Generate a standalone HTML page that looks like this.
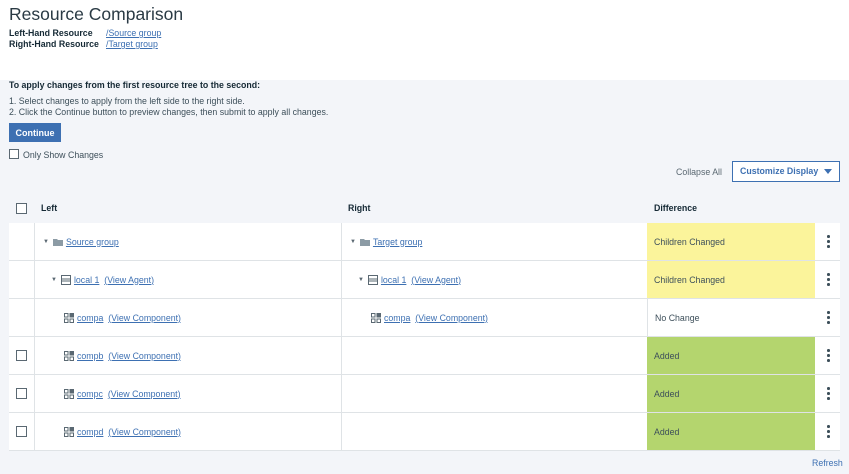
<!DOCTYPE html>
<html><head><meta charset="utf-8"><style>
*{box-sizing:border-box;margin:0;padding:0}
body{width:849px;height:474px;overflow:hidden;background:#f3f5f9;font-family:"Liberation Sans",sans-serif;color:#152935;font-size:8.8px;position:relative}
.abs{position:absolute}
a{color:#3d70b2;text-decoration:underline}
.top{left:0;top:0;width:849px;height:80px;background:#fff}
.cb{width:11px;height:11px;border:1px solid #5a6872;background:#fff}
.row{position:absolute;left:9px;width:831px;height:38px;background:#fff;border-bottom:1px solid #dfe3e6}
.cell{position:absolute;top:0;height:100%;display:flex;align-items:center}
.vl{position:absolute;top:0;height:100%;width:1px;background:#dfe3e6}
.tri{font-size:6px;color:#5a6872;margin-right:4px}
.dots{position:absolute;left:818px;width:3px;top:12px}
.dots i{display:block;width:2.5px;height:2.5px;border-radius:50%;background:#3d4f5a;margin-bottom:2.5px}
.ic{display:inline-block;margin-right:3px}
</style></head><body>
<div class="abs top"></div>
<div class="abs" style="left:9px;top:4px;font-size:17.5px;color:#2a3a44">Resource Comparison</div>
<div class="abs" style="left:9px;top:28px;font-weight:bold">Left-Hand Resource</div>
<div class="abs" style="left:9px;top:39px;font-weight:bold">Right-Hand Resource</div>
<div class="abs" style="left:106px;top:28px"><a>/Source group</a></div>
<div class="abs" style="left:106px;top:39px"><a>/Target group</a></div>
<div class="abs" style="left:9px;top:80px;font-weight:bold">To apply changes from the first resource tree to the second:</div>
<div class="abs" style="left:9px;top:96px;color:#3d4f5a">1. Select changes to apply from the left side to the right side.</div>
<div class="abs" style="left:9px;top:107px;color:#3d4f5a">2. Click the Continue button to preview changes, then submit to apply all changes.</div>
<div class="abs" style="left:9px;top:123px;width:52px;height:19px;background:#3d70b2;color:#fff;font-weight:bold;font-size:9px;display:flex;align-items:center;justify-content:center">Continue</div>
<div class="abs cb" style="left:9px;top:149px;width:10px;height:10px"></div>
<div class="abs" style="left:23px;top:150px;color:#3d4f5a">Only Show Changes</div>
<div class="abs" style="left:676px;top:167px;color:#5a6872">Collapse All</div>
<div class="abs" style="left:732px;top:161px;width:108px;height:21px;border:1px solid #3d70b2;background:#fff;color:#3d70b2;font-weight:bold;font-size:8.8px;padding-left:7px;line-height:19px">Customize Display<span style="position:absolute;right:7px;top:7px;border-left:4px solid transparent;border-right:4px solid transparent;border-top:5px solid #3d70b2"></span></div>
<div class="abs cb" style="left:16px;top:203px"></div>
<div class="abs" style="left:41px;top:203px;font-weight:bold">Left</div>
<div class="abs" style="left:348px;top:203px;font-weight:bold">Right</div>
<div class="abs" style="left:654px;top:203px;font-weight:bold">Difference</div>

<div class="row" style="top:223px">
 <div class="vl" style="left:25px"></div><div class="vl" style="left:332px"></div>
 <div class="cell" style="left:34px"><span class="tri">▼</span><svg class="ic" width="10" height="8"><path d="M0 1h4l1 1h5v6H0z" fill="#8c9ba5"/></svg><a>Source group</a></div>
 <div class="cell" style="left:341px"><span class="tri">▼</span><svg class="ic" width="10" height="8"><path d="M0 1h4l1 1h5v6H0z" fill="#8c9ba5"/></svg><a>Target group</a></div>
 <div class="cell" style="left:638px;width:168px;background:#fbf49b;padding-left:7px;color:#3d4f5a">Children Changed</div>
 <div class="dots"><i></i><i></i><i></i></div>
</div>
<div class="row" style="top:261px">
 <div class="vl" style="left:25px"></div><div class="vl" style="left:332px"></div>
 <div class="cell" style="left:42px"><span class="tri">▼</span><svg class="ic" width="10" height="10"><rect x=".5" y=".5" width="9" height="9" fill="none" stroke="#5a6872"/><path d="M1 4h8M1 6h8" stroke="#5a6872"/></svg><a>local 1</a>&nbsp;&nbsp;<a>(View Agent)</a></div>
 <div class="cell" style="left:349px"><span class="tri">▼</span><svg class="ic" width="10" height="10"><rect x=".5" y=".5" width="9" height="9" fill="none" stroke="#5a6872"/><path d="M1 4h8M1 6h8" stroke="#5a6872"/></svg><a>local 1</a>&nbsp;&nbsp;<a>(View Agent)</a></div>
 <div class="cell" style="left:638px;width:168px;background:#fbf49b;padding-left:7px;color:#3d4f5a">Children Changed</div>
 <div class="dots"><i></i><i></i><i></i></div>
</div>
<div class="row" style="top:299px">
 <div class="vl" style="left:25px"></div><div class="vl" style="left:332px"></div>
 <div class="cell" style="left:55px"><svg class="ic" width="10" height="10"><g fill="none" stroke="#5a6872"><rect x=".5" y=".5" width="3.5" height="3.5"/><rect x="6" y="6" width="3.5" height="3.5"/><rect x=".5" y="6" width="3.5" height="3.5"/></g><rect x="5.5" y="0" width="4.5" height="4.5" fill="#5a6872"/></svg><a>compa</a>&nbsp;&nbsp;<a>(View Component)</a></div>
 <div class="cell" style="left:362px"><svg class="ic" width="10" height="10"><g fill="none" stroke="#5a6872"><rect x=".5" y=".5" width="3.5" height="3.5"/><rect x="6" y="6" width="3.5" height="3.5"/><rect x=".5" y="6" width="3.5" height="3.5"/></g><rect x="5.5" y="0" width="4.5" height="4.5" fill="#5a6872"/></svg><a>compa</a>&nbsp;&nbsp;<a>(View Component)</a></div>
 <div class="cell" style="left:638px;width:168px;padding-left:7px;color:#3d4f5a;border-left:1px solid #dfe3e6">No Change</div>
 <div class="dots"><i></i><i></i><i></i></div>
</div>
<div class="row" style="top:337px">
 <div class="vl" style="left:25px"></div><div class="vl" style="left:332px"></div>
 <div class="cb" style="position:absolute;left:7px;top:13px"></div>
 <div class="cell" style="left:55px"><svg class="ic" width="10" height="10"><g fill="none" stroke="#5a6872"><rect x=".5" y=".5" width="3.5" height="3.5"/><rect x="6" y="6" width="3.5" height="3.5"/><rect x=".5" y="6" width="3.5" height="3.5"/></g><rect x="5.5" y="0" width="4.5" height="4.5" fill="#5a6872"/></svg><a>compb</a>&nbsp;&nbsp;<a>(View Component)</a></div>
 <div class="cell" style="left:638px;width:168px;background:#b4d56e;padding-left:7px;color:#3d4f5a">Added</div>
 <div class="dots"><i></i><i></i><i></i></div>
</div>
<div class="row" style="top:375px">
 <div class="vl" style="left:25px"></div><div class="vl" style="left:332px"></div>
 <div class="cb" style="position:absolute;left:7px;top:13px"></div>
 <div class="cell" style="left:55px"><svg class="ic" width="10" height="10"><g fill="none" stroke="#5a6872"><rect x=".5" y=".5" width="3.5" height="3.5"/><rect x="6" y="6" width="3.5" height="3.5"/><rect x=".5" y="6" width="3.5" height="3.5"/></g><rect x="5.5" y="0" width="4.5" height="4.5" fill="#5a6872"/></svg><a>compc</a>&nbsp;&nbsp;<a>(View Component)</a></div>
 <div class="cell" style="left:638px;width:168px;background:#b4d56e;padding-left:7px;color:#3d4f5a">Added</div>
 <div class="dots"><i></i><i></i><i></i></div>
</div>
<div class="row" style="top:413px">
 <div class="vl" style="left:25px"></div><div class="vl" style="left:332px"></div>
 <div class="cb" style="position:absolute;left:7px;top:13px"></div>
 <div class="cell" style="left:55px"><svg class="ic" width="10" height="10"><g fill="none" stroke="#5a6872"><rect x=".5" y=".5" width="3.5" height="3.5"/><rect x="6" y="6" width="3.5" height="3.5"/><rect x=".5" y="6" width="3.5" height="3.5"/></g><rect x="5.5" y="0" width="4.5" height="4.5" fill="#5a6872"/></svg><a>compd</a>&nbsp;&nbsp;<a>(View Component)</a></div>
 <div class="cell" style="left:638px;width:168px;background:#b4d56e;padding-left:7px;color:#3d4f5a">Added</div>
 <div class="dots"><i></i><i></i><i></i></div>
</div>
<div class="abs" style="left:812px;top:458px;color:#3d70b2">Refresh</div>
</body></html>
